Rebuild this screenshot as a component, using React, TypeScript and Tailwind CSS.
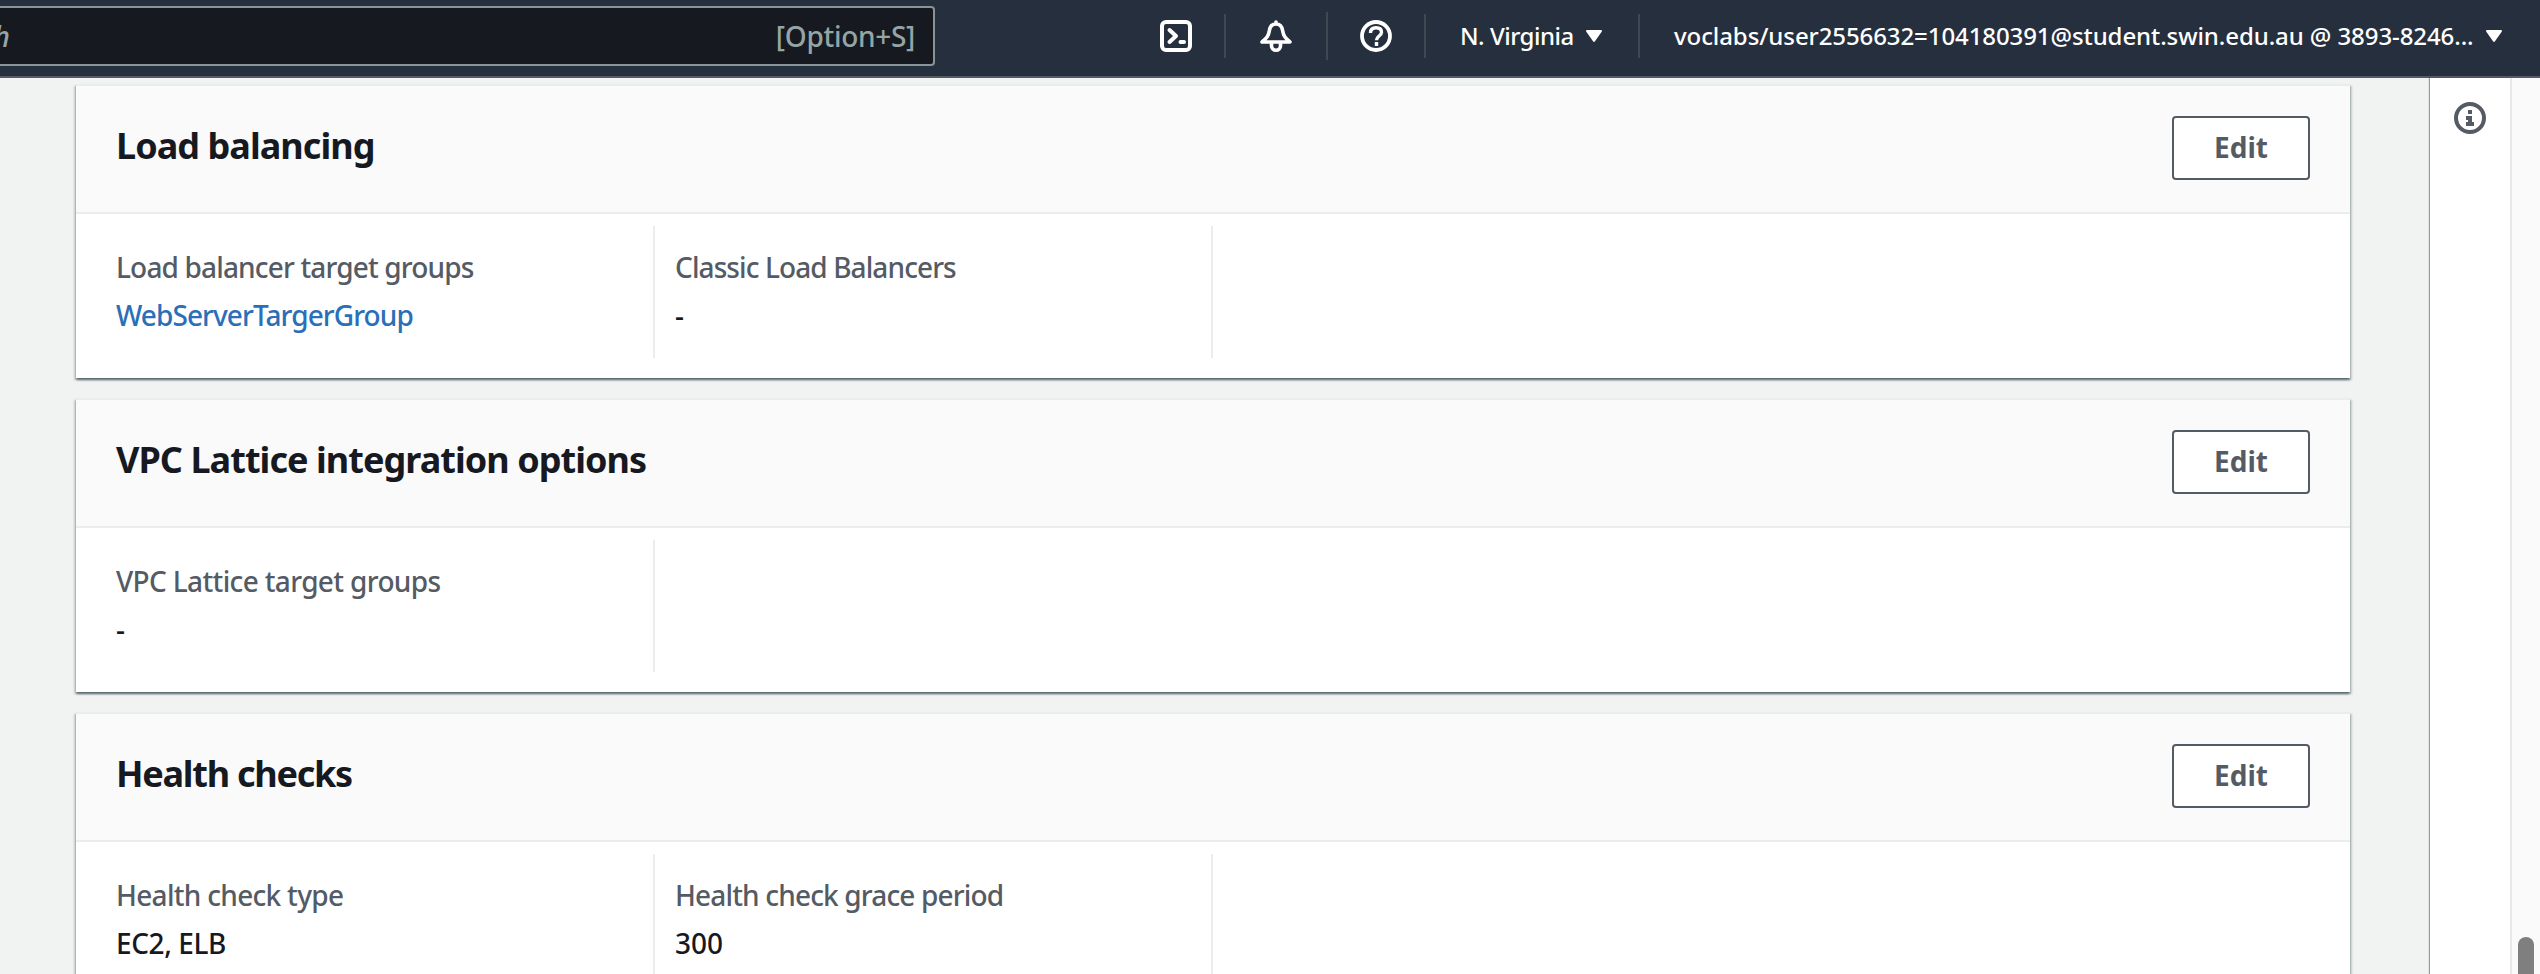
import React from "react";

type Field = { label: string; value: string; link?: boolean; labelCls: string; valueCls: string };

function Card({ title, titleCls, fields }: { title: string; titleCls: string; fields: Field[] }) {
  return (
    <section className="w-[2274px] shrink-0 border-t-2 border-[#eaeded] bg-white shadow-[0_2px_2px_0_rgba(0,28,36,0.5),2px_2px_2px_0_rgba(0,28,36,0.15),-2px_2px_2px_0_rgba(0,28,36,0.15)]">
      <header className="flex h-[128px] items-start justify-between border-b-2 border-[#eaeded] bg-[#fafafa] px-10">
        <h2 className={"pt-[38px] text-[36px] leading-[44px] font-bold whitespace-nowrap text-[#16191f] " + titleCls}>{title}</h2>
        <button className="mt-[30px] flex h-16 w-[138px] items-center justify-center rounded-[4px] border-2 border-[#545b64] bg-white pb-[2px] text-[28px] font-bold text-[#545b64]">
          Edit
        </button>
      </header>
      <div className="flex h-[164px] pt-3 pl-10">
        {fields.map((f, i) => (
          <div
            key={f.label}
            className={
              "h-[132px] border-r-2 border-[#eaeded] pt-[19px] text-[28px] leading-[44px] font-medium whitespace-nowrap " +
              (i === 0 ? "w-[539px]" : "w-[558px] pl-5")
            }
          >
            <div className={"text-[#545b64] " + f.labelCls}>{f.label}</div>
            <div className={"mt-1 " + (f.link ? "text-[#2a6fb8] " : "text-[#16191f] ") + f.valueCls}>{f.value}</div>
          </div>
        ))}
      </div>
    </section>
  );
}

function Caret() {
  return (
    <svg className="h-3 w-4" viewBox="0 0 16 12" fill="#fff">
      <path d="M1.2 0h13.6c1 0 1.500.8.9 1.700L9 11.300c-.5.8-1.500.8-2 0L.3 1.700C-.3.800.2 0 1.200 0z" />
    </svg>
  );
}

export default function App() {
  return (
    <div className="flex h-[974px] w-[2540px] flex-col overflow-hidden bg-[#f1f3f3] font-['Noto_Sans','Open_Sans',sans-serif]">
      <nav className="flex h-[78px] shrink-0 items-start border-b-2 border-[#545b64] bg-[#262f3e] font-medium text-white">
        <div className="mt-[6px] flex h-[60px] w-[935px] items-center justify-between rounded-r-[4px] border-2 border-l-0 border-[#879596] bg-[#16191f] pr-[18px] text-[28px] text-[#95a5a6]">
          <span className="-ml-[7px] text-[29px] italic">h</span>
          <span className="tracking-[-0.3px]">[Option+S]</span>
        </div>
        <div className="mt-5 ml-[225px] flex h-8 w-8">
          <svg className="h-8 w-8" viewBox="0 0 32 32" fill="none" stroke="#fff" strokeWidth="4" strokeLinejoin="round" strokeLinecap="round">
            <rect x="2" y="2" width="28" height="28" rx="4" />
            <path d="M9.500 10l6.500 6-6.500 6M20.500 22h3.500" />
          </svg>
        </div>
        <div className="mt-[14px] ml-8 h-11 w-[2px] bg-[#414750]" />
        <div className="mt-5 ml-[34px] flex h-8 w-8">
          <svg className="h-8 w-8" viewBox="0 0 32 32" fill="none" stroke="#fff" strokeWidth="3.600" strokeLinejoin="round" strokeLinecap="round">
            <path d="M16 4c-4 0-6 2.600-6.600 6.500C8.500 16.500 6.500 18 2 22h28c-4.500-4-6.500-5.500-7.400-11.500C22 6.600 20 4 16 4zM16 2v2M11.500 23v2.700a4.500 4.500 0 0 0 9 0V23" />
          </svg>
        </div>
        <div className="mt-3 ml-[34px] h-12 w-[2px] bg-[#414750]" />
        <div className="mt-5 ml-8 flex h-8 w-8">
          <svg className="h-8 w-8" viewBox="0 0 32 32" fill="none" stroke="#fff" strokeWidth="3.800">
            <circle cx="16" cy="16" r="14" />
            <path d="M10.500 13c0-3.500 2-5.200 5.500-5.200s5.500 1.700 5.500 4.400c0 4-5 3.600-5 8M16.500 22v4" strokeWidth="3.400" />
          </svg>
        </div>
        <div className="mt-[14px] ml-[32px] h-11 w-[2px] bg-[#414750]" />
        <div className="ml-[34px] flex h-[72px] w-[142px] items-center justify-between text-[24px] whitespace-nowrap">
          <span className="tracking-[-0.5px]">N. Virginia</span>
          <Caret />
        </div>
        <div className="mt-[14px] ml-[36px] h-11 w-[2px] bg-[#414750]" />
        <div className="ml-[34px] flex h-[72px] w-[828px] items-center justify-between text-[24px] whitespace-nowrap">
          <span className="tracking-[-0.09px]">voclabs/user2556632=104180391@student.swin.edu.au @ 3893-8246...</span>
          <Caret />
        </div>
      </nav>
      <div className="flex h-[896px]">
        <main className="flex w-[2430px] flex-col gap-5 overflow-hidden pt-[6px] pl-[76px]">
          <Card
            title="Load balancing"
            titleCls="tracking-[-0.95px]"
            fields={[
              { label: "Load balancer target groups", value: "WebServerTargerGroup", link: true, labelCls: "tracking-[-0.84px]", valueCls: "tracking-[-0.92px]" },
              { label: "Classic Load Balancers", value: "-", labelCls: "tracking-[-0.9px]", valueCls: "" },
            ]}
          />
          <Card
            title="VPC Lattice integration options"
            titleCls="tracking-[-0.95px]"
            fields={[{ label: "VPC Lattice target groups", value: "-", labelCls: "tracking-[-0.64px]", valueCls: "" }]}
          />
          <Card
            title="Health checks"
            titleCls="tracking-[-1.25px]"
            fields={[
              { label: "Health check type", value: "EC2, ELB", labelCls: "tracking-[-0.7px]", valueCls: "tracking-[-0.4px]" },
              { label: "Health check grace period", value: "300", labelCls: "tracking-[-0.84px]", valueCls: "" },
            ]}
          />
        </main>
        <aside className="z-10 flex w-20 justify-center bg-white pt-6 shadow-[-1px_0_1px_0_rgba(0,28,36,0.4)]">
          <svg className="h-8 w-8" viewBox="0 0 32 32" fill="#545b64">
            <circle cx="16" cy="16" r="14" fill="none" stroke="#545b64" strokeWidth="4" />
            <path d="M14 8h4v4h-4zM12 14h6v6h2v4h-8v-4h2v-2h-2z" />
          </svg>
        </aside>
        <div className="flex w-[30px] items-end border-l-2 border-[#e8e8e8] bg-[#fafafa] pl-[6px]">
          <div className="h-[37px] w-4 rounded-t-full bg-[#7f7f7f]" />
        </div>
      </div>
    </div>
  );
}
